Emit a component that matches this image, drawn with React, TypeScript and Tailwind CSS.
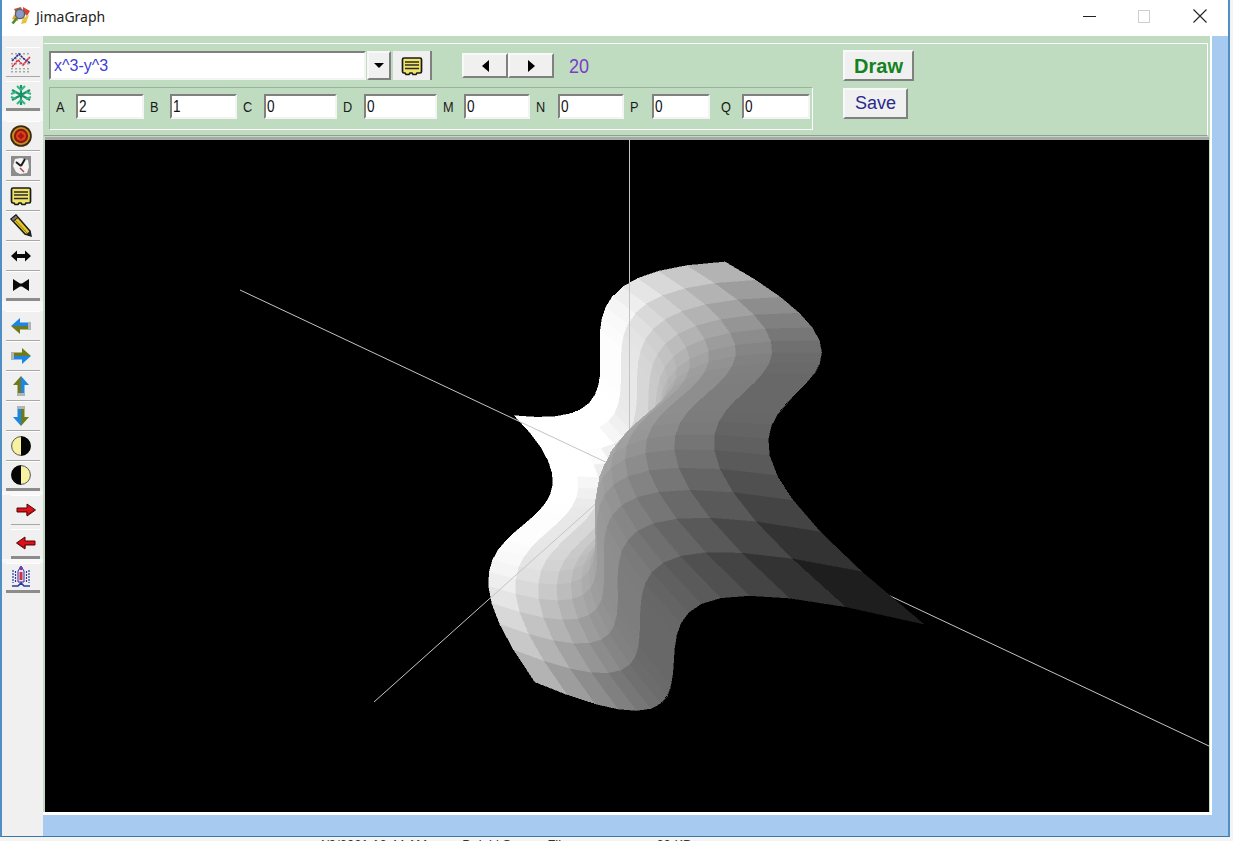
import type { ReactNode } from 'react';

const FONT = "font-['Liberation_Sans',Arial,sans-serif]";

// perspective of the plotted surface, fitted against the picture
const O = [629, 474];
const DU = [0, -126];
const DV = [95, -84];
const DF = [130, 63];
const PU = -0.13;
const PV = 0.12;
const PF = -0.095;
const CELLS = 20;

function surface(u: number, v: number) {
  const f = u ** 3 - v ** 3;
  const w = 1 + PU * u + PV * v + PF * f;
  return {
    x: O[0] + (DU[0] * u + DV[0] * v + DF[0] * f) / w,
    y: O[1] + (DU[1] * u + DV[1] * v + DF[1] * f) / w,
    f,
    w,
  };
}

type Cell = { points: string; fill: string; depth: number };

function buildCells(): Cell[] {
  const cells: Cell[] = [];
  const step = 2 / CELLS;
  for (let i = 0; i < CELLS; i++) {
    for (let j = 0; j < CELLS; j++) {
      const u = -1 + i * step;
      const v = -1 + j * step;
      const corners = [surface(u, v), surface(u + step, v), surface(u + step, v + step), surface(u, v + step)];
      const mid = surface(u + step / 2, v + step / 2);
      const level = Math.max(0.09, Math.min(1, 0.7 - 0.34 * mid.f));
      const g = Math.round(level * 255);
      cells.push({
        points: corners.map((c) => `${c.x.toFixed(1)},${c.y.toFixed(1)}`).join(' '),
        fill: `rgb(${g},${g},${g})`,
        depth: mid.w,
      });
    }
  }
  return cells.sort((a, b) => b.depth - a.depth);
}

const CELL_LIST = buildCells();
const AXIS_DEPTH = 1;

function Plot() {
  const far = CELL_LIST.filter((c) => c.depth >= AXIS_DEPTH);
  const near = CELL_LIST.filter((c) => c.depth < AXIS_DEPTH);
  const quad = (c: Cell, i: number) => (
    <polygon key={i} points={c.points} fill={c.fill} stroke={c.fill} strokeWidth="0.5" />
  );
  return (
    <svg viewBox="45 140 1164 672" className="block h-[672px] w-[1164px]" shapeRendering="crispEdges">
      <rect x="45" y="140" width="1164" height="672" fill="#000" />
      {far.map(quad)}
      <g stroke="#c4c4c4" strokeWidth="1" shapeRendering="auto">
        <line x1="629.5" y1="140" x2="629.5" y2="474" />
        <line x1="240" y1="290" x2="1209" y2="746" />
        <line x1="374" y1="702" x2="629" y2="474" />
      </g>
      {near.map(quad)}
    </svg>
  );
}

function ChartIcon() {
  return (
    <svg viewBox="0 0 22 22" className="h-[22px] w-[22px]">
      <g fill="#a8a8a8">
        {[1, 5, 9, 13, 17].map((x) =>
          [2, 7, 12, 17, 20].map((y) => <rect key={`${x}-${y}`} x={x} y={y} width="2" height="1.5" />),
        )}
      </g>
      <path d="M2 10 L9 3 L14 8 L20 12" fill="none" stroke="#2a2a90" strokeWidth="1.6" strokeDasharray="2.5 0.6" />
      <path d="M2 16 L8 9 L13 14 L20 6" fill="none" stroke="#d8303a" strokeWidth="1.6" strokeDasharray="2.5 0.6" />
    </svg>
  );
}

function SnowIcon() {
  return (
    <svg viewBox="0 0 22 22" className="h-[22px] w-[22px]" fill="none">
      <g stroke="#1a9068" strokeWidth="2.2">
        <path d="M11 1V21M2 6L20 16M2 16L20 6" />
      </g>
      <g stroke="#32b884" strokeWidth="2">
        <path d="M7 2L11 6L15 2M7 20L11 16L15 20M1 10L6 8M21 10L16 8M1 13L6 15M21 13L16 15" />
      </g>
    </svg>
  );
}

function TargetIcon() {
  return (
    <svg viewBox="0 0 22 22" className="h-[22px] w-[22px]">
      <circle cx="11" cy="11" r="10.8" fill="#3c2a10" />
      <circle cx="11" cy="11" r="9" fill="#c89020" />
      <circle cx="11" cy="11" r="7.2" fill="#8a1a10" />
      <circle cx="11" cy="11" r="5" fill="#e0401c" />
      <path d="M11 7.5L14.5 11L11 14.5L7.5 11Z" fill="#a81a10" />
    </svg>
  );
}

function ClockIcon() {
  return (
    <svg viewBox="0 0 22 22" className="h-[22px] w-[22px]">
      <rect x="1" y="1" width="20" height="20" fill="#8c8c8c" />
      <path d="M5 4L11 3L18 5L19 12L17 18L10 19L6 17L3 11Z" fill="#f4f4f4" />
      <path d="M11 11L6 7M11 11L15 4" stroke="#1a1a1a" strokeWidth="2" />
      <path d="M10 13L14 17" stroke="#b04040" strokeWidth="1.5" />
    </svg>
  );
}

function NoteIcon() {
  return (
    <svg viewBox="0 0 22 20" className="h-[20px] w-[22px]">
      <path
        d="M3 2H19Q20.5 2 20.5 3.5V15.5Q20.5 17 19 17H16L15 18.5H12L11 17H9L8 18.5H5L4 17H3Q1.5 17 1.5 15.5V3.5Q1.5 2 3 2Z"
        fill="#f0e468"
        stroke="#1a1a1a"
        strokeWidth="1.7"
      />
      <path d="M4 6H18M4 9H18M4 12.5H18" stroke="#2a2a2a" strokeWidth="1.3" />
    </svg>
  );
}

function PencilIcon() {
  return (
    <svg viewBox="0 0 22 24" className="h-[24px] w-[22px]">
      <path d="M1 5L6 1L20 17L21 22L15 20Z" fill="#e2c828" stroke="#1a1a1a" strokeWidth="1.5" />
      <path d="M1 5L6 1L8 3.5L3 7.5Z" fill="#777" stroke="#1a1a1a" strokeWidth="1" />
      <path d="M16 20.5L20.5 16.5L21 22Z" fill="#222" />
      <path d="M5 6L17 19" stroke="#8a7a10" strokeWidth="1" />
    </svg>
  );
}

function WidenIcon() {
  return (
    <svg viewBox="0 0 20 14" className="h-[14px] w-[20px]">
      <path d="M6 5H14V1.5L20 7L14 12.5V9H6V12.5L0 7L6 1.5Z" fill="#0a0a0a" />
    </svg>
  );
}

function NarrowIcon() {
  return (
    <svg viewBox="0 0 20 14" className="h-[14px] w-[20px]">
      <path d="M2 1L9 5.5H11L18 1V13L11 8.5H9L2 13Z" fill="#0a0a0a" />
    </svg>
  );
}

function BlueArrow({ rotate }: { rotate: number }) {
  return (
    <svg viewBox="0 0 22 22" className="h-[22px] w-[22px]" style={{ transform: `rotate(${rotate}deg)` }}>
      <path d="M1 11L10 3V7.5H21V11Z" fill="#1c86e0" />
      <path d="M1 11L10 19V14.5H21V11Z" fill="#6f7a1c" />
      <rect x="18" y="7.5" width="3" height="7" fill="#b4b4b4" />
    </svg>
  );
}

function HalfMoon({ flip }: { flip?: boolean }) {
  return (
    <svg viewBox="0 0 22 22" className="h-[22px] w-[22px]" style={flip ? { transform: 'scaleX(-1)' } : undefined}>
      <circle cx="11" cy="11" r="9.4" fill="#f6f2a0" stroke="#555" strokeWidth="1" />
      <path d="M11 1.2A9.8 9.8 0 0 1 11 20.8Z" fill="#050505" />
    </svg>
  );
}

function RedArrow({ flip }: { flip?: boolean }) {
  return (
    <svg viewBox="0 0 20 14" className="h-[14px] w-[20px]" style={flip ? { transform: 'scaleX(-1)' } : undefined}>
      <path d="M1 5H11V1L19.5 7L11 13V9H1Z" fill="#e01018" stroke="#4a0a0a" strokeWidth="1" />
      <path d="M1.5 8.5H11V12L18 7.5" fill="none" stroke="#8a0a10" strokeWidth="1" />
    </svg>
  );
}

function RocketIcon() {
  return (
    <svg viewBox="0 0 22 24" className="h-[24px] w-[22px]">
      <path d="M11 1L14 6V17H8V6Z" fill="#e5e5f4" stroke="#3a2aa0" strokeWidth="1" />
      <rect x="9.5" y="7" width="3" height="8" fill="#d03040" />
      <path d="M3 5V18M19 5V18M5.5 6V17M16.5 6V17" stroke="#2a3aa0" strokeWidth="1.2" strokeDasharray="2 1" />
      <path d="M2 21H8L11 18L14 21H20" fill="none" stroke="#2a3aa0" strokeWidth="1.6" />
      <circle cx="11" cy="3.5" r="1.8" fill="#7a3aa8" />
    </svg>
  );
}

function AppLogo() {
  return (
    <svg viewBox="0 0 20 20" className="h-5 w-5">
      <path d="M3 3L10 1L12 6L6 9Z" fill="#b5563a" />
      <path d="M12 1L19 5L16 10L12 6Z" fill="#d8442c" />
      <path d="M3 9L8 9L7 15L1 13Z" fill="#e7a33c" />
      <path d="M12 12L18 9L15 17L10 18Z" fill="#e7c23c" />
      <circle cx="9" cy="8" r="4.6" fill="#8a9ac8" stroke="#55606e" strokeWidth="1.4" />
      <path d="M6 12L1.5 17.5" stroke="#4c8c2c" strokeWidth="2.6" />
    </svg>
  );
}

function ToolButton({ children, last, inset }: { children: ReactNode; last?: boolean; inset?: boolean }) {
  return (
    <div
      className={`flex h-[30px] items-center justify-center border-t border-t-white bg-[#f0f0f0] ${
        inset ? 'ml-[9px] w-[29px]' : 'ml-[4px] w-[34px] pr-[4px]'
      } ${last ? 'border-b-[3px] border-b-[#8c8c8c]' : 'border-b border-b-[#a8a8a8]'}`}
    >
      {children}
    </div>
  );
}

function Toolbar() {
  return (
    <div className="flex w-[41px] shrink-0 flex-col bg-[#f0f0f0] pt-[11px]">
      <ToolButton><ChartIcon /></ToolButton>
      <div className="h-[4px]" />
      <ToolButton last><SnowIcon /></ToolButton>
      <div className="h-[10px] bg-[#f8f8f8]" />
      <ToolButton><TargetIcon /></ToolButton>
      <ToolButton><ClockIcon /></ToolButton>
      <ToolButton><NoteIcon /></ToolButton>
      <ToolButton><PencilIcon /></ToolButton>
      <ToolButton><WidenIcon /></ToolButton>
      <ToolButton last><NarrowIcon /></ToolButton>
      <div className="h-[10px] bg-[#f8f8f8]" />
      <ToolButton><BlueArrow rotate={0} /></ToolButton>
      <ToolButton><BlueArrow rotate={180} /></ToolButton>
      <ToolButton><BlueArrow rotate={90} /></ToolButton>
      <ToolButton><BlueArrow rotate={270} /></ToolButton>
      <ToolButton><HalfMoon /></ToolButton>
      <ToolButton last><HalfMoon flip /></ToolButton>
      <div className="h-[4px] bg-[#f8f8f8]" />
      <ToolButton inset><RedArrow /></ToolButton>
      <div className="h-[4px]" />
      <ToolButton inset last><RedArrow flip /></ToolButton>
      <div className="h-[4px] bg-[#f8f8f8]" />
      <ToolButton last><RocketIcon /></ToolButton>
    </div>
  );
}

function Param({ label, value, width, labelWidth }: { label: string; value: string; width: string; labelWidth: string }) {
  return (
    <div className="flex items-center">
      <span className={`${labelWidth} text-[15px] leading-none text-[#1a1a1a]`}>
        <span className="inline-block origin-left scale-x-[0.85]">{label}</span>
      </span>
      <div
        className={`${width} h-[25px] border-2 border-t-[#808080] border-l-[#808080] border-r-[#f4f4f4] border-b-[#f4f4f4] bg-white pl-[1px] text-[16px] leading-[21px] text-[#111]`}
      >
        <span className="inline-block origin-left scale-x-[0.85]">{value}</span>
      </div>
    </div>
  );
}

function RaisedButton({ children, className }: { children: ReactNode; className: string }) {
  return (
    <div
      className={`flex items-center justify-center border-2 border-t-[#f8f8f8] border-l-[#f8f8f8] border-r-[#808080] border-b-[#808080] bg-[#f0f0f0] ${className}`}
    >
      {children}
    </div>
  );
}

function ControlPanel() {
  return (
    <div className="h-[101px] shrink-0 bg-[#c0dcc0] pl-[1px] pr-[2px] pt-[7px]">
      <div className="flex h-[93px] border-t border-t-white border-r border-r-white border-b border-b-[#8fa08f] pl-[5px] pt-[7px]">
        <div className="w-[794px]">
          <div className="flex h-[29px] items-center">
            <div className="h-[29px] w-[317px] border-2 border-t-[#808080] border-l-[#808080] border-r-[#f4f4f4] border-b-[#f4f4f4] bg-white pl-[3px] text-[16px] leading-[25px] text-[#3d3dd6]">
              x^3-y^3
            </div>
            <RaisedButton className="ml-[1px] h-[29px] w-[24px]">
              <span className="h-0 w-0 border-x-[5px] border-t-[5px] border-x-transparent border-t-black" />
            </RaisedButton>
            <div className="ml-[2px] flex h-[29px] w-[39px] items-center justify-center border-r-2 border-r-[#808080] bg-[#f0f0f0]">
              <NoteIcon />
            </div>
            <RaisedButton className="ml-[30px] h-[25px] w-[46px]">
              <span className="h-0 w-0 border-y-[6px] border-r-[7px] border-y-transparent border-r-black" />
            </RaisedButton>
            <RaisedButton className="h-[25px] w-[46px]">
              <span className="h-0 w-0 border-y-[6px] border-l-[7px] border-y-transparent border-l-black" />
            </RaisedButton>
            <span className="ml-[15px] inline-block origin-left scale-x-[0.9] text-[20px] text-[#7a3cc8]">20</span>
          </div>
          <div className="mt-[7px] flex h-[43px] w-[764px] items-center gap-[6px] border border-t-[#9fb09f] border-l-[#9fb09f] border-r-white border-b-white pb-[4px] pl-[6px]">
            <Param label="A" value="2" labelWidth="w-[20px]" width="w-[68px]" />
            <Param label="B" value="1" labelWidth="w-[20px]" width="w-[67px]" />
            <Param label="C" value="0" labelWidth="w-[21px]" width="w-[73px]" />
            <Param label="D" value="0" labelWidth="w-[21px]" width="w-[73px]" />
            <Param label="M" value="0" labelWidth="w-[21px]" width="w-[66px]" />
            <Param label="N" value="0" labelWidth="w-[22px]" width="w-[66px]" />
            <Param label="P" value="0" labelWidth="w-[22px]" width="w-[58px]" />
            <Param label="Q" value="0" labelWidth="w-[26px] pl-[5px]" width="w-[68px]" />
          </div>
        </div>
        <div className="flex flex-col gap-[7px]">
          <RaisedButton className="-mt-[1px] h-[31px] w-[71px] text-[20px] font-bold text-[#14821e]">Draw</RaisedButton>
          <RaisedButton className="h-[31px] w-[65px] text-[18px] text-[#2a2a8c]">Save</RaisedButton>
        </div>
      </div>
    </div>
  );
}

export default function App() {
  return (
    <div className={`h-[841px] w-[1233px] overflow-hidden bg-[#f4f4f4] ${FONT}`}>
      <div className="flex h-[837px] w-[1230px] flex-col border-x-2 border-b border-x-[#4f8fc4] border-b-[#3b78a8] bg-white">
        <div className="flex h-[36px] shrink-0 items-center bg-white pb-[4px] pl-[9px]">
          <AppLogo />
          <span className="ml-[5px] font-['Noto_Sans',sans-serif] text-[14px] text-[#222]">JimaGraph</span>
          <div className="ml-auto flex items-center pr-[21px]">
            <div className="h-[1px] w-[13px] bg-[#222]" />
            <div className="ml-[42px] h-[13px] w-[12px] border border-[#cfcfcf]" />
            <svg viewBox="0 0 14 14" className="ml-[43px] h-[14px] w-[14px]" stroke="#222" strokeWidth="1.1">
              <path d="M0.5 0.5L13.5 13.5M13.5 0.5L0.5 13.5" />
            </svg>
          </div>
        </div>
        <div className="flex min-h-0 flex-1 bg-[#a6caf0]">
          <Toolbar />
          <div className="h-[779px] w-[1169px] shrink-0 border-r-[2px] border-b-[3px] border-r-white border-b-white bg-[#c0dcc0]">
            <ControlPanel />
            <div className="ml-[2px] h-[3px] w-[1164px] bg-[#a8a8a8]" />
            <div className="ml-[2px]">
              <Plot />
            </div>
          </div>
        </div>
      </div>
      <div className="h-[4px] overflow-hidden whitespace-nowrap text-[13px] leading-[16px] text-[#333]">
        <span className="inline-block h-[4px] w-[9px] bg-[#555]" />
        <span className="ml-[309px]">4/9/2021 12:44 AM</span>
        <span className="ml-[35px]">Delphi Source File</span>
        <span className="ml-[88px]">20 KB</span>
      </div>
    </div>
  );
}
